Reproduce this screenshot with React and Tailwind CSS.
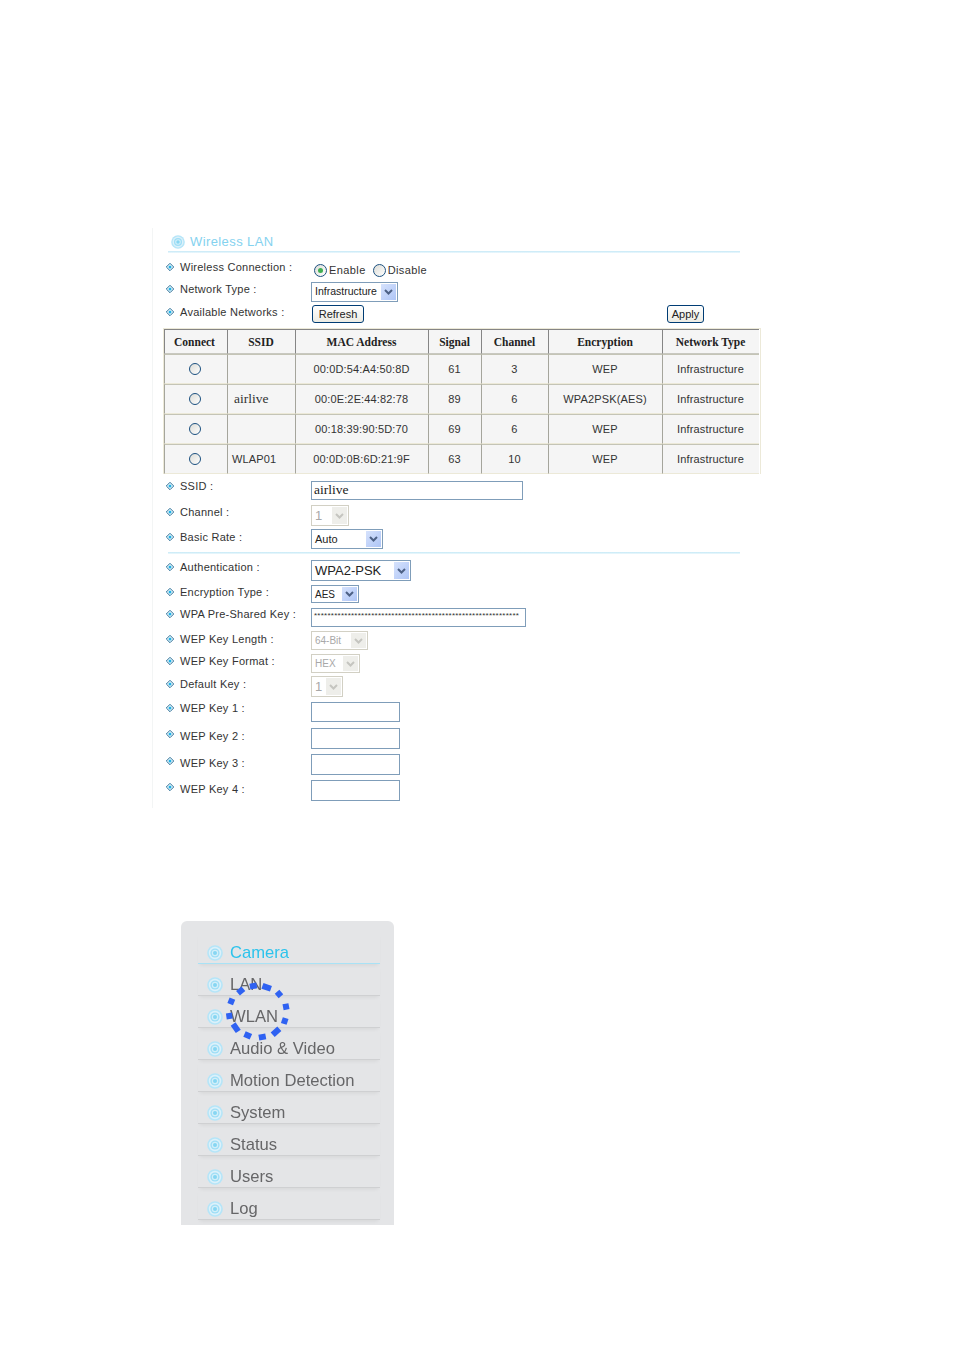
const sans = "font-['Liberation_Sans',Arial,sans-serif]";
const serif = "font-['Liberation_Serif','Times_New_Roman',serif]";

function Bullet({ className = "" }) {
  return (
    <svg width="8" height="8" viewBox="0 0 8 8" className={"shrink-0 " + className}>
      <path d="M4 .3 L7.7 4 L4 7.7 L.3 4 Z" fill="#f4fbfe" stroke="#2a6f97" strokeWidth="1" strokeLinejoin="round" />
      <circle cx="4" cy="4" r="1.5" fill="#1fb2e8" />
    </svg>
  );
}

function Target({ size = 16 }) {
  return (
    <svg width={size} height={size} viewBox="0 0 16 16" className="shrink-0">
      <circle cx="8" cy="8" r="7.8" fill="#b5e5f8" />
      <circle cx="8" cy="8" r="6.2" fill="#dcf1fa" />
      <circle cx="8" cy="8" r="4.6" fill="#9edef6" />
      <circle cx="8" cy="8" r="3.2" fill="#d3eff9" />
      <circle cx="8" cy="8" r="2" fill="#86d6f3" />
    </svg>
  );
}

function Row({ label, labelClass = "", bulletClass = "mt-[3px]", className, children }) {
  return (
    <div className={"flex items-start pl-[13px] " + className}>
      <Bullet className={bulletClass} />
      <div className={"ml-[6px] w-[131px] text-[11px] leading-[14px] tracking-[0.25px] text-[#333] whitespace-nowrap " + labelClass}>
        {label}
      </div>
      {children}
    </div>
  );
}

function Chevron({ color }) {
  return (
    <svg width="9" height="6" viewBox="0 0 9 6">
      <path d="M1 1 L4.5 4.5 L8 1" fill="none" stroke={color} strokeWidth="2" />
    </svg>
  );
}

function Select({ text, className, textClass = "text-[11px]", disabled = false }) {
  return (
    <div className={(disabled ? "border-[#d2d0c4] text-[#a8a8a8] " : "border-[#7f9db9] text-[#222] ") + "flex h-full items-stretch border bg-white p-px " + className}>
      <div className={"flex flex-1 items-center pl-[2px] " + textClass}>{text}</div>
      <div className={(disabled ? "bg-[#eeeeea] " : "bg-gradient-to-br from-[#d6e2fc] to-[#aec5f6] ") + "flex w-[15px] items-center justify-center"}>
        <Chevron color={disabled ? "#c5c5c0" : "#4d6185"} />
      </div>
    </div>
  );
}

function Input({ className, children }) {
  return (
    <div className={"flex h-full items-center border border-[#7f9db9] bg-white px-[2px] " + className}>{children}</div>
  );
}

function Radio({ on }) {
  return (
    <span className="flex h-[13px] w-[13px] shrink-0 items-center justify-center rounded-full border border-[#1c5180] bg-gradient-to-br from-[#dcdcd6] to-white">
      {on && <span className="h-[5px] w-[5px] rounded-full bg-[#3fae52]" />}
    </span>
  );
}

function Btn({ children, className }) {
  return (
    <div className={"flex h-[18px] items-center justify-center rounded-[3px] border border-[#003c74] bg-gradient-to-b from-white to-[#ecebe3] text-[11px] text-[#222] " + className}>
      {children}
    </div>
  );
}

const headers = ["Connect", "SSID", "MAC Address", "Signal", "Channel", "Encryption", "Network Type"];
const rows = [
  ["", "00:0D:54:A4:50:8D", "61", "3", "WEP", "Infrastructure"],
  ["airlive", "00:0E:2E:44:82:78", "89", "6", "WPA2PSK(AES)", "Infrastructure"],
  ["", "00:18:39:90:5D:70", "69", "6", "WEP", "Infrastructure"],
  ["WLAP01", "00:0D:0B:6D:21:9F", "63", "10", "WEP", "Infrastructure"],
];
const grid = "grid grid-cols-[63px_68px_133px_53px_67px_114px_97px]";
const hCell = "flex h-[25px] items-center justify-center border-t border-l border-[#858585] border-b-[#c8c8c0] border-b bg-[#f5f5f5] pt-[2px] pr-px text-[11.5px] font-bold text-[#222] " + serif;
const cell = "flex h-[30px] items-center justify-center border-t border-l border-l-[#a5a59c] border-t-[#c4c4b6] border-b border-b-[#ece9d8] bg-[#f5f5f5] pr-px text-[#333] ";

function cellClass(c) {
  if (c === "airlive") return cell + "!justify-start pl-[6px] text-[13.5px] " + serif;
  if (c === "WLAP01") return cell + "!justify-start pl-[4px] text-[11px] tracking-[0.15px] " + sans;
  return cell + "text-[11px] tracking-[0.15px] " + sans;
}

function NetTable() {
  return (
    <div className="ml-[10px] mt-[5px] w-[598px] border-t border-l border-r border-[#ece9d8]">
      <div className={grid}>
        {headers.map((h, i) => (
          <div key={h} className={hCell + (i === 0 ? " !pr-[3px]" : "")}>{h}</div>
        ))}
      </div>
      {rows.map((r, i) => (
        <div key={i} className={grid}>
          <div className={cell + "!pr-[3px]"}>
            <span className="h-[12px] w-[12px] rounded-full border border-[#1c5180] bg-gradient-to-br from-[#dcdcd6] to-white" />
          </div>
          {r.map((c, j) => (
            <div key={j} className={cellClass(c)}>{c}</div>
          ))}
        </div>
      ))}
    </div>
  );
}

const menu = ["Camera", "LAN", "WLAN", "Audio & Video", "Motion Detection", "System", "Status", "Users", "Log"];

const dashes = [
  [19.7, 10, 7], [32.3, 5, 7], [45.7, 6.3, 9], [58, 13, 6], [65, 25.7, 6], [63.7, 40, 6],
  [55, 50.7, 9], [41.3, 56, 7], [26.7, 54.3, 7], [14.7, 46.7, 9], [8.3, 35, 6], [10.3, 20.3, 6],
];

function DashedRing() {
  return (
    <svg width="74" height="66" viewBox="0 0 74 66" className="absolute left-[40px] top-[60px]">
      {dashes.map(([x, y, l], i) => {
        const dx = x - 37, dy = y - 31;
        const n = Math.hypot(dx, dy);
        const tx = -dy / n, ty = dx / n;
        return (
          <line
            key={i}
            x1={x - (tx * l) / 2}
            y1={y - (ty * l) / 2}
            x2={x + (tx * l) / 2}
            y2={y + (ty * l) / 2}
            stroke="#2f62f2"
            strokeWidth="6"
          />
        );
      })}
    </svg>
  );
}

export default function App() {
  return (
    <div className={"h-[1350px] w-[955px] overflow-hidden bg-white " + sans}>
      <div className="h-[228px]" />
      <div className="ml-[152px] w-[620px] border-l border-[#f3f5f5] pb-[7px]">
        <div className="ml-[15px] w-[572px]">
          <div className="flex h-[23px] items-center gap-[5px] pl-[3px] pt-[5px]">
            <Target size={14} />
            <span className="text-[13px] tracking-[0.4px] text-[#84d2ef]">Wireless LAN</span>
          </div>
          <div className="h-[2px] bg-gradient-to-b from-[#c4e8f6] to-[#eef9fd]" />
        </div>

        <Row label="Wireless Connection :" className="mt-[7px] h-[16px]">
          <div className="mt-[2px] ml-[3px] flex items-center text-[11px] tracking-[0.4px] text-[#333]">
            <Radio on />
            <span className="ml-[2px]">Enable</span>
            <span className="ml-[7px]"><Radio /></span>
            <span className="ml-[2px]">Disable</span>
          </div>
        </Row>
        <Row label="Network Type :" className="mt-[6px] h-[20px]">
          <Select text="Infrastructure" className="w-[87px]" textClass="text-[10.5px]" />
        </Row>
        <Row label="Available Networks :" className="mt-[3px] h-[18px]">
          <Btn className="ml-px w-[52px]">Refresh</Btn>
          <Btn className="ml-[303px] w-[37px]">Apply</Btn>
        </Row>

        <NetTable />

        <Row label="SSID :" labelClass="-mt-[2px]" bulletClass="mt-px" className="mt-[7px] h-[19px]">
          <Input className={"w-[212px] text-[13.5px] text-[#222] " + serif}>airlive</Input>
        </Row>
        <Row label="Channel :" className="mt-[5px] h-[21px]">
          <Select text="1" disabled className="w-[38px]" textClass="text-[13px]" />
        </Row>
        <Row label="Basic Rate :" labelClass="mt-px" bulletClass="mt-[4px]" className="mt-[3px] h-[20px]">
          <Select text="Auto" className="w-[72px]" />
        </Row>
        <div className="ml-[15px] mt-[3px] h-[2px] w-[572px] bg-gradient-to-b from-[#c4e8f6] to-[#eef9fd]" />
        <Row label="Authentication :" className="mt-[6px] h-[21px]">
          <Select text="WPA2-PSK" className="w-[100px]" textClass="text-[13px]" />
        </Row>
        <Row label="Encryption Type :" className="mt-[4px] h-[18px]">
          <Select text="AES" className="w-[48px]" textClass="text-[10px]" />
        </Row>
        <Row label="WPA Pre-Shared Key :" labelClass="-mt-px" bulletClass="mt-[2px]" className="mt-[5px] h-[19px]">
          <Input className="w-[215px] items-start overflow-hidden pt-[2px] text-[8px] leading-[10px] tracking-[0.25px] text-[#333] whitespace-nowrap">
            {"*".repeat(61)}
          </Input>
        </Row>
        <Row label="WEP Key Length :" labelClass="mt-px" bulletClass="mt-[4px]" className="mt-[4px] h-[19px]">
          <Select text="64-Bit" disabled className="w-[57px]" textClass="text-[10px]" />
        </Row>
        <Row label="WEP Key Format :" className="mt-[4px] h-[19px]">
          <Select text="HEX" disabled className="w-[49px]" textClass="text-[10px]" />
        </Row>
        <Row label="Default Key :" labelClass="mt-px" bulletClass="mt-[4px]" className="mt-[3px] h-[21px]">
          <Select text="1" disabled className="w-[32px]" textClass="text-[13px]" />
        </Row>
        <Row label="WEP Key 1 :" labelClass="-mt-px" bulletClass="mt-[2px]" className="mt-[5px] h-[20px]">
          <Input className="w-[89px]" />
        </Row>
        <Row label="WEP Key 2 :" labelClass="mt-px" bulletClass="mt-[2px]" className="mt-[6px] h-[21px]">
          <Input className="w-[89px]" />
        </Row>
        <Row label="WEP Key 3 :" labelClass="mt-[2px]" bulletClass="mt-[3px]" className="mt-[5px] h-[21px]">
          <Input className="w-[89px]" />
        </Row>
        <Row label="WEP Key 4 :" labelClass="mt-[2px]" bulletClass="mt-[3px]" className="mt-[5px] h-[21px]">
          <Input className="w-[89px]" />
        </Row>
      </div>

      <div className="relative ml-[181px] mt-[113px] h-[304px] w-[213px] rounded-t-[6px] bg-[#e4e5e7] pl-[17px] pr-[14px] pt-[11px]">
        {menu.map((m, i) => (
          <div
            key={m}
            className={
              "flex h-[32px] items-center gap-[7px] pl-[9px] pt-[10px] shadow-[0_3px_4px_-2px_rgba(0,0,0,0.07)] " +
              (i === 0 ? "border-b border-[#a8e2f6]" : "border-b border-[#cfd0d2]")
            }
          >
            <Target size={16} />
            <span className={"text-[16.6px] leading-[20px] blur-[0.4px] " + (i === 0 ? "text-[#2cc3ec]" : "text-[#666668]")}>{m}</span>
          </div>
        ))}
        <DashedRing />
      </div>
    </div>
  );
}
